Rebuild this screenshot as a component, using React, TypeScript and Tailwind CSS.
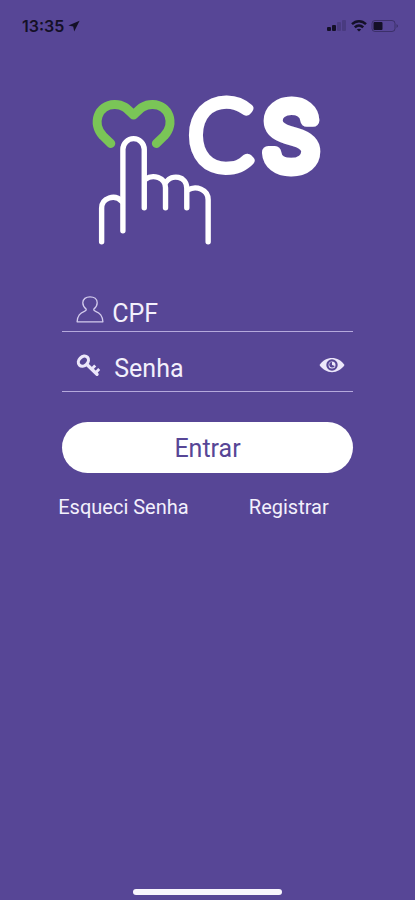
import { useState } from "react"

function StatusBar() {
  return (
    <header className="flex h-[52px] items-center justify-between pr-4 pl-[22px] text-[#141027]">
      <div className="flex items-center gap-1">
        <span className="font-[Inter,sans-serif] text-base font-semibold">13:35</span>
        <svg viewBox="0 0 12 12" className="size-3" fill="currentColor" aria-hidden="true">
          <path d="M11.6 0.8 L0.4 5.6 L5.2 6.6 L6.2 11.4 Z" />
        </svg>
      </div>

      <div className="flex items-center gap-1">
        <svg viewBox="0 0 20 12" className="h-3 w-5" fill="currentColor" aria-hidden="true">
          <rect x="0" y="7" width="4" height="4" rx="1" />
          <rect x="5" y="5" width="4" height="6" rx="1" />
          <rect x="10" y="2" width="4" height="9" rx="1" opacity="0.2" />
          <rect x="15" y="0" width="4" height="11" rx="1" opacity="0.2" />
        </svg>
        <svg viewBox="0 0 16 12" className="h-3 w-4" fill="none" stroke="currentColor" strokeWidth="2.4" aria-hidden="true">
          <path d="M1 4.2 C5 0.2 11 0.2 15 4.2" />
          <path d="M3.8 7.4 C6.3 4.8 9.7 4.8 12.2 7.4" />
          <path d="M8 11.6 L5.8 9.5 C7 8.4 9 8.4 10.2 9.5 Z" fill="currentColor" stroke="none" />
        </svg>
        <svg viewBox="0 0 28 12" className="h-3 w-7" fill="currentColor" aria-hidden="true">
          <rect x="1" y="0.5" width="23" height="11" rx="3" fill="none" stroke="currentColor" opacity="0.4" />
          <rect x="2.5" y="2" width="9" height="8" rx="1" />
          <path d="M25.5 4 C27.5 5 27.5 7 25.5 8 Z" opacity="0.4" />
        </svg>
      </div>
    </header>
  )
}

function Logo() {
  return (
    <svg viewBox="62 60 291 190" className="w-full" role="img" aria-label="CS">
      {/* heart */}
      <path
        d="M110.9 143.6 L103 136 C91.5 123.5 98 105 114.5 104.5 C123 104.3 127 108.3 133.7 115.2 C140.4 108.3 144.4 104.3 152.9 104.5 C169.4 105 175.9 123.5 164.4 136 L156.5 143.6"
        fill="none"
        stroke="#7ac557"
        strokeWidth="9"
        strokeLinecap="round"
        strokeLinejoin="round"
      />
      {/* hand */}
      <g fill="none" stroke="#fff" strokeWidth="5.4" strokeLinecap="round" strokeLinejoin="round">
        <path d="M101.7 242 V208.6 C101.7 198 115 194 122 201.6" />
        <path d="M123 231 V149.5 A10.7 10.7 0 0 1 144.4 149.5 V208" />
        <path d="M145.5 179.5 C153 174 165.7 177.5 165.7 188 V208" />
        <path d="M166 182.5 C172 174 187 176 187 188.5 V208" />
        <path d="M188 190.3 C196 185.3 208.4 189.5 208.4 200 V242" />
      </g>
      <g fill="#fff" stroke="#fff" strokeLinejoin="round">
        <text x="188" y="170" fontFamily="Lato, sans-serif" fontSize="97" fontWeight="300" strokeWidth="9">
          C
        </text>
        <text x="263" y="169" fontFamily="Inter, sans-serif" fontSize="90" fontWeight="300" strokeWidth="13">
          S
        </text>
      </g>
    </svg>
  )
}

function UserIcon() {
  return (
    <svg viewBox="0 0 28 28" className="size-7 shrink-0" fill="none" stroke="#d3cbed" strokeWidth="1.3" strokeLinejoin="round" aria-hidden="true">
      <path d="M10.3 13.2 C8 11.4 6.8 9.6 6.8 6.8 C6.8 3 10 0.8 14 0.8 C18 0.8 21.2 3 21.2 6.8 C21.2 9.6 20 11.4 17.7 13.2 C17.5 14.2 18.2 14.8 19.6 15.4 C24 17.2 26.4 19.4 26.9 25.8 H1.1 C1.6 19.4 4 17.2 8.4 15.4 C9.8 14.8 10.5 14.2 10.3 13.2 Z" />
    </svg>
  )
}

function KeyIcon() {
  return (
    <svg viewBox="0 -2 28 28" className="size-7 shrink-0" fill="none" stroke="#ece7fa" aria-hidden="true">
      <ellipse cx="7.4" cy="8.2" rx="5.6" ry="4.4" transform="rotate(-45 7.4 8.2)" strokeWidth="3.2" />
      <path d="M11.2 11.8 L21 21.2" strokeWidth="3.4" strokeLinecap="round" />
      <path d="M15.5 16.2 L19.2 12.4 M19.4 20 L23.2 16" strokeWidth="2.8" />
    </svg>
  )
}

function EyeIcon() {
  return (
    <svg viewBox="0 0 26 16" className="h-4 w-[26px]" aria-hidden="true">
      <path d="M0.5 8 C6.5 -1.5 19.5 -1.5 25.5 8 C19.5 17.5 6.5 17.5 0.5 8 Z" fill="#ece7fa" />
      <circle cx="13" cy="8" r="4.6" fill="none" stroke="#574696" strokeWidth="2.2" />
      <path d="M13 8 V5 A3 3 0 0 0 10.2 8 A3 3 0 0 0 15.8 9 Z" fill="#574696" />
    </svg>
  )
}

const inputStyle =
  "min-w-0 flex-1 bg-transparent pt-2 text-[25px] leading-8 text-white outline-none placeholder:text-[#f3f0fc] placeholder:opacity-100"

export default function App() {
  const [showPassword, setShowPassword] = useState(false)

  return (
    <div className="flex min-h-screen flex-col bg-[#574696] font-[Roboto,sans-serif]">
      <StatusBar />

      <main className="flex-1 px-[15%] pt-2">
        <Logo />

        <form className="mt-10" onSubmit={(e) => e.preventDefault()}>
          <div className="flex h-[42px] items-center gap-2 border-b border-[#b5a9dc] pl-[14px]">
            <UserIcon />
            <input type="text" inputMode="numeric" placeholder="CPF" aria-label="CPF" className={inputStyle} />
          </div>

          <div className="flex h-[60px] items-center gap-2.5 border-b border-[#b5a9dc] pt-2 pr-2 pl-[14px]">
            <KeyIcon />
            <input
              type={showPassword ? "text" : "password"}
              placeholder="Senha"
              aria-label="Senha"
              className={inputStyle}
            />
            <button type="button" aria-label="Mostrar senha" onClick={() => setShowPassword(!showPassword)}>
              <EyeIcon />
            </button>
          </div>

          <button
            type="submit"
            className="mt-[30px] h-[51px] w-full rounded-full bg-white pt-1 text-[25px] text-[#574696]"
          >
            Entrar
          </button>
        </form>

        <nav className="mt-5 -ml-1 flex justify-between pr-6 text-xl text-[#f3f0fc]">
          <a href="#">Esqueci Senha</a>
          <a href="#">Registrar</a>
        </nav>
      </main>

      <footer className="flex justify-center pb-[5px]">
        <div className="h-[6px] w-[36%] rounded-full bg-[#f8f6fd]" />
      </footer>
    </div>
  )
}
